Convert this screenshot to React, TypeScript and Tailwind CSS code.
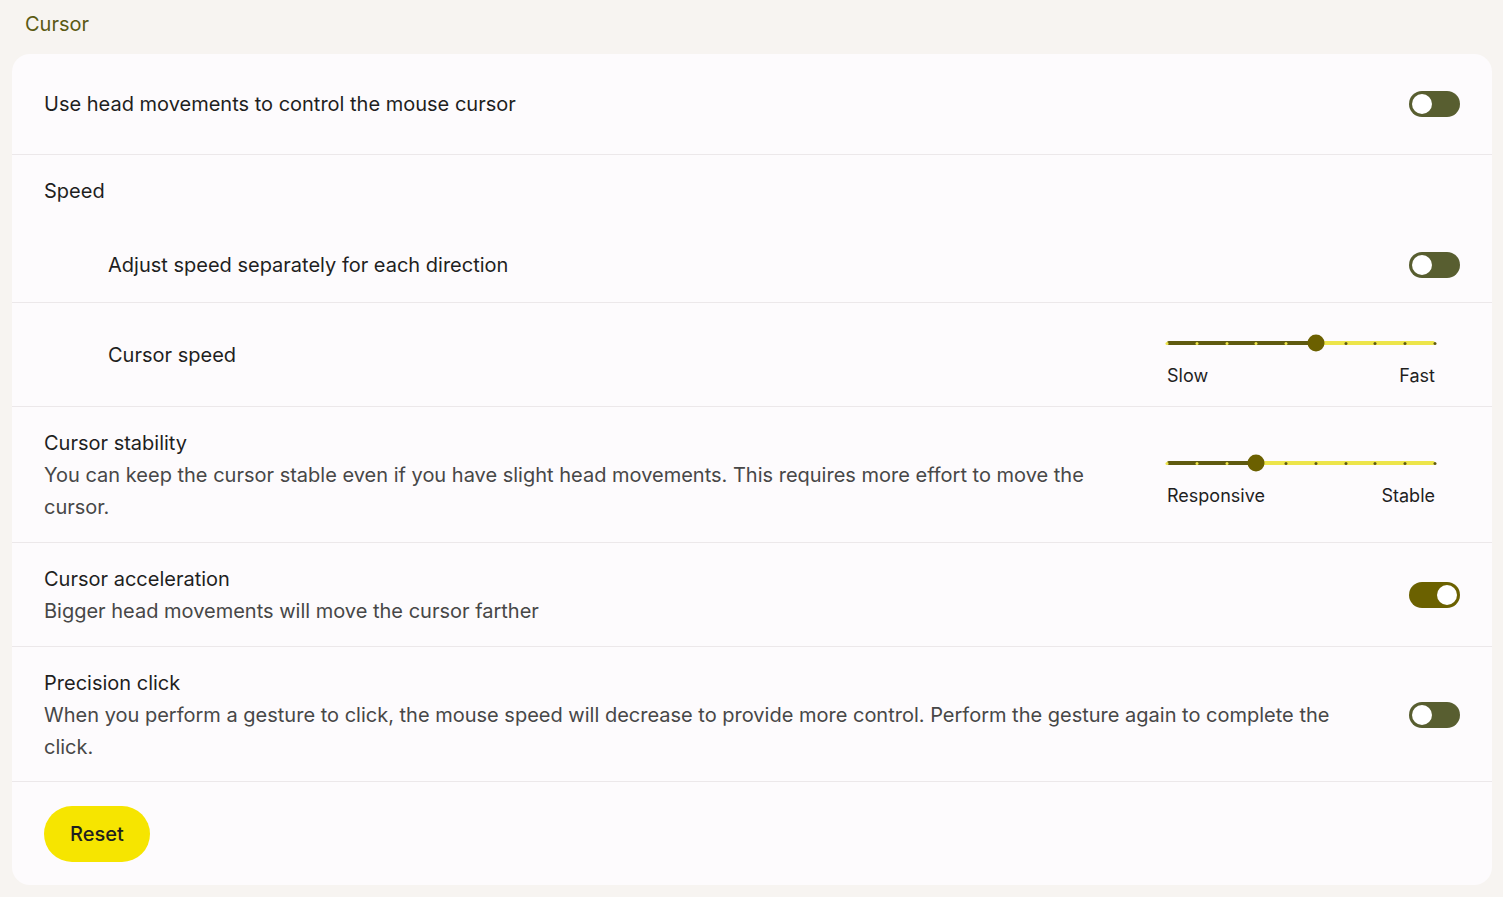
import React, { useState } from "react";

const Toggle: React.FC<{ on: boolean; onChange: () => void }> = ({ on, onChange }) => (
  <button
    type="button"
    onClick={onChange}
    className={`relative flex h-[26px] w-[51px] shrink-0 items-center rounded-full px-[3px] ${
      on ? "justify-end bg-[#6b6100]" : "justify-start bg-[#585e30]"
    }`}
  >
    <span className="h-[20px] w-[20px] rounded-full bg-white" />
  </button>
);

const Slider: React.FC<{ value: number; left: string; right: string }> = ({ value, left, right }) => {
  const steps = 10;
  const pct = (value / (steps - 1)) * 100;
  return (
    <div className="mr-[25px] flex h-[66px] w-[268px] shrink-0 flex-col">
      <div className="relative mt-[19px] h-[4px] w-full">
        <div className="absolute inset-0 rounded-full bg-[#ede54a]" />
        <div className="absolute left-0 top-0 h-full rounded-full bg-[#5f5a10]" style={{ width: `${pct}%` }} />
        {Array.from({ length: steps }).map((_, i) => (
          <span
            key={i}
            className={`absolute top-[1px] h-[3px] w-[3px] -translate-x-1/2 rounded-full ${
              i < value ? "bg-[#ede54a]" : "bg-[#5f5a10]"
            }`}
            style={{ left: `${(i / (steps - 1)) * 100}%` }}
          />
        ))}
        <span
          className="absolute top-1/2 h-[17px] w-[17px] -translate-x-1/2 -translate-y-1/2 rounded-full bg-[#6b6000]"
          style={{ left: `${pct}%` }}
        />
      </div>
      <div className="mt-auto flex justify-between text-[18px] leading-[24px] text-[#1f1f1f]">
        <span>{left}</span>
        <span>{right}</span>
      </div>
    </div>
  );
};

export default function App() {
  const [headControl, setHeadControl] = useState(false);
  const [separate, setSeparate] = useState(false);
  const [accel, setAccel] = useState(true);
  const [precision, setPrecision] = useState(false);

  return (
    <div
      className="min-h-screen w-full bg-[#f7f4f1] pb-[12px] pl-[12px] pr-[11px] text-[#1f1f1f]"
      style={{ fontFamily: "Inter, Roboto, 'Liberation Sans', sans-serif" }}
    >
      <h2 className="flex h-[54px] items-start pl-[13px] pt-[10px] text-[20px] leading-[28px] text-[#5b5a14]">
        Cursor
      </h2>

      <div className="rounded-[18px] bg-[#fdfbfd] text-[20px] leading-[32px]">
        {/* Head movements */}
        <div className="flex h-[101px] items-center justify-between border-b border-[#ece8ea] px-[32px]">
          <span>Use head movements to control the mouse cursor</span>
          <Toggle on={headControl} onChange={() => setHeadControl(!headControl)} />
        </div>

        {/* Speed */}
        <div className="px-[32px] pb-[20px] pt-[20px]">Speed</div>
        <div className="flex h-[76px] items-center justify-between border-b border-[#ece8ea] pl-[96px] pr-[32px]">
          <span>Adjust speed separately for each direction</span>
          <Toggle on={separate} onChange={() => setSeparate(!separate)} />
        </div>
        <div className="flex h-[104px] items-center justify-between border-b border-[#ece8ea] pl-[96px] pr-[32px]">
          <span>Cursor speed</span>
          <Slider value={5} left="Slow" right="Fast" />
        </div>

        {/* Stability */}
        <div className="flex items-center justify-between border-b border-[#ece8ea] px-[32px] pb-[19px] pt-[20px]">
          <div className="mr-[80px] max-w-[1040px] flex-1">
            <div>Cursor stability</div>
            <div className="text-[#474747]">
              You can keep the cursor stable even if you have slight head movements. This requires more effort to move the
              cursor.
            </div>
          </div>
          <Slider value={3} left="Responsive" right="Stable" />
        </div>

        {/* Acceleration */}
        <div className="flex items-center justify-between border-b border-[#ece8ea] px-[32px] pb-[19px] pt-[20px]">
          <div className="mr-[80px] flex-1">
            <div>Cursor acceleration</div>
            <div className="text-[#474747]">Bigger head movements will move the cursor farther</div>
          </div>
          <Toggle on={accel} onChange={() => setAccel(!accel)} />
        </div>

        {/* Precision click */}
        <div className="flex items-center justify-between border-b border-[#ece8ea] px-[32px] pb-[18px] pt-[20px]">
          <div className="mr-[60px] max-w-[1300px] flex-1">
            <div>Precision click</div>
            <div className="text-[#474747]">
              When you perform a gesture to click, the mouse speed will decrease to provide more control. Perform the gesture
              again to complete the click.
            </div>
          </div>
          <Toggle on={precision} onChange={() => setPrecision(!precision)} />
        </div>

        <div className="flex h-[103px] items-center px-[32px]">
          <button
            type="button"
            className="h-[56px] w-[106px] rounded-full bg-[#f6e500] text-[20px] font-medium text-[#1f1f1f]"
          >
            Reset
          </button>
        </div>
      </div>
    </div>
  );
}
